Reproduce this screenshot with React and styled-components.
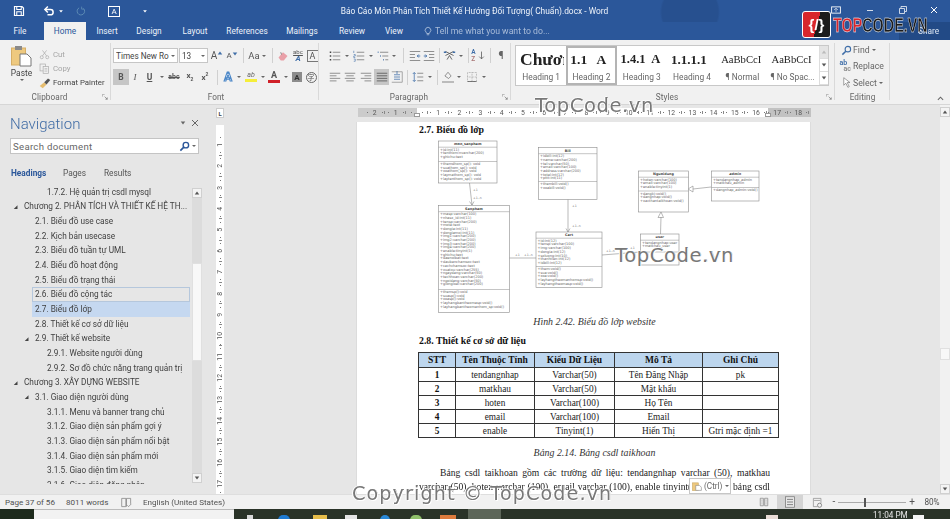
import React from "react";
import styled, { createGlobalStyle } from "styled-components";

const Global = createGlobalStyle`
  html, body { margin: 0; padding: 0; width: 950px; height: 519px; overflow: hidden; background: #f1f1f1; }
  * { box-sizing: border-box; }
  #root { width: 950px; height: 519px; }
`;
const ui = `Roboto, "Open Sans", "Liberation Sans", sans-serif`;
const serif = `"Liberation Serif", "Times New Roman", serif`;

const Shell = styled.div`
  position: relative; width: 950px; height: 519px; overflow: hidden; display: flex; flex-direction: column;
  font-family: ${ui}; color: #444; filter: blur(0.45px);
`;
/* ---------- Title bar ---------- */
const TitleBar = styled.div`
  height: 22px; background: radial-gradient(circle at 690px 12px, #27508f 0, #27508f 28px, transparent 30px), #2b579a; color: #fff;
  display: flex; align-items: center; position: relative; padding-left: 13px;
`;
const QuickBtn = styled.div`
  width: ${p => p.$w}px; display: flex; align-items: center; justify-content: ${p => p.$start ? "flex-start" : "center"};
  opacity: ${p => p.$faded ? .3 : 1};
`;
const DocTitle = styled.div`
  position: absolute; left: 0; right: 0; top: 0; height: 22px; text-align: center; line-height: 23px; font-size: 8.4px; color: #eef3fa; padding-right: 1px;
`;
const WindowBtns = styled.div`margin-left: auto; display: flex; align-items: center; padding-right: 1px; z-index: 1; margin-top: -2px;`;
const WinBtn = styled.div`width: ${p => p.$w}px; display: flex; justify-content: center;`;
const TabsBar = styled.div`height: 18px; background: #2b579a; display: flex; align-items: flex-end; padding-left: 3px; color: #eef3fa; font-size: 8.3px;`;
const Tab = styled.div`
  width: ${p => p.$w}px; height: 18px; line-height: 18px; text-align: center; margin-left: ${p => p.$ml || 0}px;
  background: ${p => p.$active ? "#f1f1f1" : "transparent"}; color: ${p => p.$active ? "#2b579a" : "#eef3fa"};
`;
const TellMe = styled.div`display: flex; align-items: center; gap: 2px; height: 18px; margin-left: 9px; color: #a9bcd9; font-size: 8.7px;`;
const Share = styled.div`
  margin-left: auto; width: 51px; height: 18px; background: #224a86; color: #dfe8f4; line-height: 18px; padding-left: 19px;
`;
/* ---------- Ribbon ---------- */
const Ribbon = styled.div`height: 65px; background: #f1f1f1; display: flex; border-bottom: 1px solid #d6d6d6; position: relative;`;
const Group = styled.div`
  width: ${p => p.$w}px; flex: none; display: flex; flex-direction: column; position: relative; padding-left: ${p => p.$pl || 0}px;
  &::after { content: ""; position: absolute; right: 0; top: 3px; bottom: 4px; width: 1px; background: #d9d9d9; }
`;
const GroupBody = styled.div`flex: 1; display: ${p => p.$row ? "flex" : "block"}; min-height: 0; padding-top: ${p => p.$pt ?? 8}px;`;
const GroupLabelRow = styled.div`height: 14px; margin-left: ${p => p.$ml || 0}px; display: flex; align-items: center; font-size: 8.2px; color: #666; margin-bottom: 0;`;
const GroupLabel = styled.div`flex: 1; text-align: center; letter-spacing: .1px;`;
const Launcher = styled.div`width: 12px; height: 10px; display: flex; align-items: center; justify-content: center;`;
const ToolRow = styled.div`display: flex; align-items: center; height: ${p => p.$h || 15}px; margin-bottom: ${p => p.$mb || 0}px;`;
const Tool = styled.div`
  width: ${p => p.$w}px; height: ${p => p.$h || 16}px; flex: none; display: flex; align-items: center; justify-content: center;
  background: ${p => p.$on ? "#c6c6c6" : "transparent"}; font-size: 9px; color: #444;
`;
const Caret = styled.div`
  width: ${p => p.$w || 8}px; flex: none; display: flex; justify-content: center;
  &::before { content: ""; border: 2px solid transparent; border-top: 2.5px solid #666; border-bottom: 0; }
`;
const Sep = styled.div`
  width: ${p => p.$w}px; flex: none; height: 15px; position: relative;
  &::before { content: ""; position: absolute; left: 50%; top: 0; bottom: 0; width: 1px; background: #d0d0d0; }
`;
const Combo = styled.div`
  width: ${p => p.$w}px; margin-right: ${p => p.$mr || 0}px; height: 15px; background: #fff; border: 1px solid #c6c6c6; flex: none;
  font-size: 8.2px; color: #444; display: flex; align-items: center; padding-left: 2px; white-space: nowrap; overflow: hidden;
  & > span { flex: 1; overflow: hidden; }
`;
const PasteCol = styled.div`width: 33px; margin-left: 5px; flex: none; display: flex; flex-direction: column; align-items: center; font-size: 8.4px; color: #444;`;
const PasteLabel = styled.div`margin-top: 1px; line-height: 11px;`;
const ClipCol = styled.div`display: flex; flex-direction: column; margin-top: 2px;`;
const ClipRow = styled.div`
  display: flex; align-items: center; gap: 2px; height: 16.4px; font-size: 7.8px; white-space: nowrap;
  color: ${p => p.$off ? "#a6a6a6" : "#444"};
`;
const ClipIcon = styled.div`width: 13px; display: flex; justify-content: center;`;
const Gallery = styled.div`width: 314px; height: 41px; background: #fff; border: 1px solid #c8c8c8; display: flex; overflow: hidden;`;
const StyleItem = styled.div`
  width: 50.3px; flex: none; height: 39px; display: flex; flex-direction: column; align-items: center; overflow: hidden;
  border: ${p => p.$on ? "2px solid #b4b4b4" : "2px solid transparent"}; margin-top: 0;
`;
const StylePreview = styled.div`
  height: 23px; width: 100%; overflow: hidden; display: flex; align-items: center; padding-left: 2px; white-space: pre; font-family: ${serif}; color: #222;
  font-size: ${p => p.$s}px; font-weight: ${p => p.$b ? 700 : 400};
`;
const StyleName = styled.div`font-size: 8.4px; color: #666; white-space: nowrap; line-height: 12px;`;
const GalleryScroll = styled.div`margin-left: auto; width: 9px; flex: none; display: flex; flex-direction: column; border-left: 1px solid #ddd;`;
const GalleryBtn = styled.div`
  flex: 1; display: flex; align-items: center; justify-content: center; background: ${p => p.$off ? "#e4e4e4" : "#fff"}; border-bottom: 1px solid #ddd;
`;
const EditRow = styled.div`display: flex; align-items: center; height: 16.3px; font-size: 8.7px; color: #666; padding-left: 4px;`;
const EditIcon = styled.div`width: 14px; flex: none; display: flex; justify-content: center;`;
const Collapse = styled.div`margin-left: auto; padding: 0 6px 2px 0; align-self: flex-end;`;

/* ---------- Main ---------- */
const Main = styled.div`height: 389px; display: flex; background: #e6e6e6;`;
const Nav = styled.div`width: 208px; flex: none; padding-top: 7px; display: flex; flex-direction: column;`;
const NavHead = styled.div`height: 24px; padding-left: 10px; display: flex; align-items: center;`;
const NavTitle = styled.div`font-size: 15px; font-weight: 300; color: #3f6ba5; flex: 1;`;
const NavHeadBtns = styled.div`display: flex; align-items: center; gap: 5px; padding-right: 9px; margin-top: -3px;`;
const Search = styled.div`
  margin: 2px 0 0 10px; width: 189px; height: 16px; background: #fff; border: 1px solid #c4c4c4; display: flex; align-items: center;
  padding-left: 2px; font-size: 9.6px; letter-spacing: .3px; color: #666;
  & > span { flex: 1; }
`;
const NavTabs = styled.div`margin: 11px 0 0 11px; height: 15px; display: flex; font-size: 8.3px; color: #555; align-items: center;`;
const NavTab = styled.div`width: ${p => p.$w}px; font-weight: ${p => p.$on ? 700 : 400}; color: ${p => p.$on ? "#2b579a" : "#555"};`;
const TreeWrap = styled.div`margin-top: 4.7px; display: flex;`;
const Tree = styled.div`width: 190px; height: 299px; overflow: hidden;`;
const TreeRow = styled.div`
  height: 14.67px; display: flex; align-items: center; font-size: 8.25px; color: #404040; white-space: nowrap;
  padding-left: ${p => [10, 21, 33][p.$lv]}px;
`;
const Twist = styled.div`width: 11px; flex: none; display: flex; justify-content: center; padding-left: 0;`;
const TreeLabel = styled.div`
  flex: 1; height: 14.67px; line-height: 14px; padding-left: 3px; overflow: hidden;
  background: ${p => p.$sel ? "#c5d8f0" : "transparent"};
  outline: ${p => p.$hov ? "1px solid #b5c7dc" : "none"}; outline-offset: -1px;
`;
const NavScroll = styled.div`margin: 3px 0 0 2px; width: 10px; height: 295px; background: #dcdcdc; display: flex; flex-direction: column;`;
const ScrollBtn = styled.div`height: 10px; flex: none; background: #f4f4f4; border: 1px solid #d0d0d0; display: flex; align-items: center; justify-content: center;`;
const ScrollThumb = styled.div`
  margin-top: ${p => p.$top}px; height: ${p => p.$h}px; background: #f8f8f8; flex: none; border: 1px solid #e0e0e0;
`;
const ScrollPad = styled.div`flex: 1;`;
const VRulerCol = styled.div`width: 8px; margin-left: 8px; flex: none; display: flex; flex-direction: column;`;
const Corner = styled.div`
  margin-top: 3px; height: 10px; background: #fff; border: 1px solid #ccc; font-size: 6px; font-weight: 700; color: #444; display: flex; align-items: center; justify-content: center;
`;
const VRuler = styled.div`margin-top: 7px; flex: 1; background: #fff; padding-top: 9.6px; overflow: hidden;`;
const VCell = styled.div`
  height: 21.2px; display: flex; flex-direction: column; align-items: center; justify-content: space-around; font-size: 6.8px; line-height: 7px; color: #555;
  background: linear-gradient(#888, #888) center bottom / 3px 1px no-repeat;
`;
const VNum = styled.span`writing-mode: vertical-rl; transform: rotate(180deg);`;
const Dot = styled.i`width: 1px; height: 1px; background: #777; display: block;`;
const Canvas = styled.div`flex: 1; min-width: 0; display: flex; flex-direction: column; overflow: hidden;`;
const HRuler = styled.div`
  margin: 3px 0 0 134px; width: 453px; height: 9px; flex: none; position: relative; display: flex; padding-left: 6px; overflow: hidden;
  background: linear-gradient(to right, #cbcbcb 59px, #fff 59px, #fff 410px, #c2c2c2 410px);
`;
const HCell = styled.div`
  width: 21.2px; flex: none; display: flex; align-items: center; justify-content: space-around; font-size: 6.8px; color: #555;
  background: linear-gradient(#888, #888) right center / 1px 3px no-repeat;
`;
const IndentMark = styled.div`
  position: absolute; left: ${p => p.$x}px; bottom: 0; width: 6px; height: 4px; background: #fff; border: 1px solid #999; border-bottom-width: 1px;
`;
const Page = styled.div`
  margin: 5px 0 0 132px; width: 455px; flex: 1; min-height: 0; background: #fff; overflow: hidden; padding: 1px 41px 0 62px; position: relative;
  font-family: ${serif}; color: #222; font-size: 9.3px; border-left: 1px solid #dcdcdc; border-right: 1px solid #dcdcdc;
`;
const DocHeading = styled.div`
  font-weight: 700; font-size: 9.8px; line-height: 14px; margin-top: ${p => p.$mt || 0}px; color: #111; white-space: nowrap;
`;
const Uml = styled.svg`display: block; margin: 1px 0 0 16px; flex: none;`;
const Caption = styled.div`
  text-align: center; font-style: italic; font-size: 9.9px; line-height: 12px; color: #333; margin-top: ${p => p.$mt || 0}px; width: 351px;
`;
const Table = styled.table`
  border-collapse: collapse; table-layout: fixed; width: 360px; margin: 4px 0 0 -1px; font-size: 9.3px; color: #222;
  th, td { border: 1px solid #333; padding: 0; text-align: center; white-space: nowrap; overflow: hidden; height: 14px; line-height: 12px; }
  th { background: #bdd6ee; height: 15px; font-weight: 700; color: #111; font-size: 9.5px; }
  td:first-child { font-weight: 700; color: #111; }
`;
const Para = styled.div`margin-top: 7px; font-size: 9.6px; color: #222; width: 351px;`;
const ParaLine = styled.div`
  line-height: 13.5px; height: 13.5px; white-space: normal; overflow: hidden; text-align: justify; text-align-last: justify; padding-left: ${p => p.$indent || 0}px;
`;
const PastePop = styled.div`
  position: absolute; left: 689px; top: 478px; width: 42px; height: 16px; background: #fff; border: 1px solid #c6c6c6;
  display: flex; align-items: center; gap: 2px; padding-left: 2px; font-family: ${ui}; font-size: 8.2px; color: #666; z-index: 3;
`;
const RightScroll = styled.div`width: 10px; flex: none; background: #f1f1f1; display: flex; flex-direction: column; padding-top: 2px;`;

/* ---------- Status + Taskbar ---------- */
const StatusBar = styled.div`
  height: 15px; background: #f1f1f1; display: flex; align-items: center; font-size: 8.1px; color: #505050; padding-left: 5px; border-top: 1px solid #dedede;
`;
const StatusItem = styled.div`width: ${p => p.$w}px; flex: none; white-space: nowrap; display: flex; align-items: center;`;
const StatusRight = styled.div`margin-left: auto; display: flex; align-items: center; height: 100%; padding-right: 4px;`;
const ViewBtn = styled.div`
  width: ${p => p.$w}px; height: 100%; display: flex; align-items: center; justify-content: center; background: ${p => p.$on ? "#d4d4d4" : "transparent"};
`;
const Zoom = styled.div`width: 68px; height: 1px; background: #aaa; position: relative; margin: 0 3px;`;
const ZoomThumb = styled.div`position: absolute; left: 26px; top: -4px; width: 2px; height: 9px; background: #555;`;
const ZoomPct = styled.div`width: 28px; text-align: center; font-size: 8.2px; margin-left: 3px;`;
const Taskbar = styled.div`height: 10px; background: #2a3328; display: flex; overflow: hidden; position: relative;`;
const StartBtn = styled.div`width: 34px; flex: none; background: #1d2a1c;`;
const TaskSearch = styled.div`width: 200px; flex: none; background: #f2f2f2; border-top: 1px solid #bbb;`;
const TaskIcon = styled.div`
  width: ${p => p.$w}px; height: 6px; margin: 6px 0 0 ${p => p.$ml}px; background: ${p => p.$c}; flex: none; border-radius: ${p => p.$r || 0}px ${p => p.$r || 0}px 0 0;
`;
const TaskActive = styled.div`width: 33px; margin-left: 12px; background: #5d6659; flex: none; display: flex; padding: 7px 0 0 8px; gap: 2px;`;
const TaskClock = styled.div`position: absolute; left: 873px; top: 1px; font-size: 8.2px; line-height: 10px; color: #e8e8e8;`;

/* ---------- Watermarks ---------- */
const Watermark = styled.div`
  position: absolute; left: ${p => p.$x}px; top: ${p => p.$y}px; font-family: "DejaVu Sans", sans-serif; font-size: ${p => p.$s}px; line-height: 1;
  letter-spacing: ${p => p.$ls}px; white-space: nowrap; color: #787878; z-index: 4;
  text-shadow: 1px 1px 0 #fff, -1px 0 0 #fff, 0 -1px 0 rgba(255,255,255,.8), .6px 0 0 #666;
`;
const Logo = styled.div`position: absolute; left: 802px; top: 11px; display: flex; align-items: center; gap: 2px; z-index: 5;`;
const LogoMark = styled.div`
  width: 29px; height: 27px; border-radius: 3px; border: 1px solid #fff; background: linear-gradient(105deg, #d8262c 0, #d8262c 52%, #1c1c1c 52%);
  color: #fff; font: 700 15px "Liberation Sans", sans-serif; display: flex; align-items: center; justify-content: center;
`;
const LogoText = styled.div`
  font: 700 20.5px "Liberation Sans", sans-serif; white-space: nowrap; transform: scaleX(.7); transform-origin: left center;
  -webkit-text-stroke: .4px #fff; color: #1b1b1b; width: 94px;
  & > b { color: #d8262c; }
`;

/* ---------- Icons (small drawings) ---------- */
const I = ({ s = 12, children, vb = "0 0 16 16" }) => <svg width={s} height={s} viewBox={vb} fill="none" style={{ display: "block" }}>{children}</svg>;
const G = "#5b5b5b", LG = "#8d8d8d", BL = "#3f6ea8";
const lines = (ys, x1, x2, c = LG, w = 1.3) => ys.map(y => <path key={y} d={`M${x1} ${y}H${x2}`} stroke={c} strokeWidth={w} />);
const Save = () => <I s={12}><path d="M2 2h10l2 2v10H2z" stroke="#fff" strokeWidth="1.6" /><path d="M5 2v4h6V2M5 14V9h6v5" stroke="#fff" strokeWidth="1.4" /></I>;
const Undo = () => <I s={12}><path d="M3 6h7a3.5 3.5 0 0 1 0 7H6" stroke="#fff" strokeWidth="2" /><path d="M6.5 2 2.5 6l4 4" stroke="#fff" strokeWidth="2" /></I>;
const Redo = () => <I s={10}><path d="M12 4a6 6 0 1 1-7-1" stroke="#cfe" strokeWidth="1.6" /><path d="M9 1v4h4" stroke="#cfe" strokeWidth="1.4" /></I>;
const SmallCaret = ({ c = "#fff" }) => <I s={6}><path d="M3 6h10L8 12z" fill={c} /></I>;
const Tri = ({ c = "#666" }) => <I s={6}><path d="M12 3v10H2z" fill={c} /></I>;
const Up = ({ c = "#555" }) => <I s={6}><path d="M8 4l6 8H2z" fill={c} /></I>;
const Down = ({ c = "#555" }) => <I s={6}><path d="M8 12 2 4h12z" fill={c} /></I>;
const LaunchIcon = () => <I s={6}><path d="M1 1h6M1 1v6" stroke="#888" strokeWidth="1.5" /><path d="M7 7l7 7M14 9v5H9" stroke="#666" strokeWidth="1.6" /></I>;
const PasteIcon = () => <svg width="21" height="22" viewBox="0 0 21 22" fill="none"><rect x="0.5" y="3" width="14" height="17" fill="#eec97f" stroke="#d6ae66" /><rect x="4" y="1" width="7" height="4" fill="#8a8a8a" /><path d="M9 9h7l4 4v8H9z" fill="#fff" stroke="#777" /></svg>;
const Cut = () => <I s={11}><circle cx="4" cy="12" r="2.2" stroke="#aaa" /><circle cx="12" cy="12" r="2.2" stroke="#aaa" /><path d="M5 10 11 2M11 10 5 2" stroke="#aaa" /></I>;
const CopyI = () => <I s={11}><rect x="1.5" y="1.5" width="8" height="10" stroke="#aaa" /><rect x="6" y="5" width="8" height="10" fill="#f1f1f1" stroke="#aaa" /><path d="M8 8h4M8 10h4M8 12h4" stroke="#bbb" /></I>;
const Painter = () => <I s={12}><path d="M1 12l6-5 3 3-5 5z" fill="#e6bd6f" /><path d="M7 7l5-5 3 2-5 6z" fill="#555" /></I>;
const Letter = ({ children, c = "#555", s = 9, b, it, u, f }) => <span style={{ color: c, fontSize: s, fontWeight: b ? 700 : 400, fontStyle: it ? "italic" : "normal", textDecoration: u ? "underline" : "none", fontFamily: f, lineHeight: 1 }}>{children}</span>;
const GrowA = ({ dir, s }) => <span style={{ display: "flex", alignItems: "flex-start" }}><Letter s={s}>A</Letter><span style={{ marginTop: -1 }}>{dir === "up" ? <Up c={BL} /> : <Down c={BL} />}</span></span>;
const Eraser = () => <I s={12}><path d="M2 10 8 3l6 5-5 6H5z" fill="#e9a0a8" /><path d="M5 3l1 3" stroke="#666" /></I>;
const AbcA = () => <span style={{ display: "flex", flexDirection: "column", alignItems: "center", lineHeight: 1 }}><Letter s={6} u>abc</Letter><Letter s={8} it b c={BL}>A</Letter></span>;
const BoxA = () => <span style={{ width: 12, height: 12, border: "1px solid #777", display: "flex", alignItems: "center", justifyContent: "center", fontSize: 9, color: "#555" }}>A</span>;
const TextFx = () => <Letter s={12} b c="#fff"><span style={{ WebkitTextStroke: "1px #4a86c7" }}>A</span></Letter>;
const Hl = () => <span style={{ display: "flex", flexDirection: "column", alignItems: "center", lineHeight: 1 }}><Letter s={7} it c="#666">ab</Letter><span style={{ width: 12, height: 3, background: "#f5ee3a" }} /></span>;
const RedA = () => <span style={{ display: "flex", flexDirection: "column", alignItems: "center", lineHeight: 1 }}><Letter s={9} b c="#555">A</Letter><span style={{ width: 12, height: 3, background: "#d02028" }} /></span>;
const ShadeA = () => <span style={{ width: 10, height: 10, background: "#8c8c8c", display: "flex", alignItems: "center", justifyContent: "center", fontSize: 8, fontWeight: 700, color: "#333" }}>A</span>;
const Circled = () => <span style={{ width: 11, height: 11, border: "1px solid #666", borderRadius: "50%", display: "flex", alignItems: "center", justifyContent: "center", fontSize: 7, color: "#555", fontFamily: '"Noto Sans CJK SC", sans-serif' }}>字</span>;
const Bullets = () => <I><path d="M1 3h2M1 8h2M1 13h2" stroke="#444" strokeWidth="2" />{lines([3, 8, 13], 5, 15)}</I>;
const Nums = () => <I><path d="M1 1v3M1 6h2v2H1v2h2M1 12h2v3H1" stroke={BL} strokeWidth=".8" />{lines([3, 8, 13], 5, 15)}</I>;
const Multi = () => <I><path d="M1 3h1M4 8h1M8 13h1" stroke={BL} strokeWidth="2" />{lines([3], 4, 15)}{lines([8], 7, 15)}{lines([13], 11, 15)}</I>;
const Indent = ({ flip }) => <I><g transform={flip ? "matrix(-1 0 0 1 16 0)" : ""}><path d="M1 8h4M3 6l2 2-2 2" stroke={BL} strokeWidth="1.2" />{lines([2, 14], 1, 15)}{lines([6, 10], 8, 15)}</g></I>;
const Sort = () => <I s={13}><path d="M3 3l10 5M13 3 3 8M5 13l3-5 3 5" stroke={G} strokeWidth="1.1" /><path d="M1 4h3M12 4h3" stroke={BL} strokeWidth="2" /></I>;
const AZ = () => <span style={{ display: "flex", alignItems: "center", gap: 1 }}><span style={{ display: "flex", flexDirection: "column", fontSize: 6.5, lineHeight: "6.5px", fontWeight: 600 }}><span style={{ color: BL }}>A</span><span style={{ color: "#a77" }}>Z</span></span><I s={9}><path d="M8 1v13M4 10l4 4 4-4" stroke={G} strokeWidth="1.4" /></I></span>;
const Align = ({ kind }) => { const d = { l: [[1, 15], [1, 10], [1, 15], [1, 10]], c: [[1, 15], [3, 13], [1, 15], [3, 13]], r: [[1, 15], [6, 15], [1, 15], [6, 15]], j: [[1, 15], [1, 15], [1, 15], [1, 15]] }[kind]; return <I>{d.map((p, i) => <path key={i} d={`M${p[0]} ${3 + i * 3.4}H${p[1]}`} stroke={kind === "j" ? "#666" : LG} strokeWidth="1.3" />)}</I>; };
const Dist = () => <I><path d="M1 1h14v14H1" stroke={LG} /><path d="M4 5h8M4 8h8M4 11h8M8 0v4" stroke={BL} /></I>;
const LineSp = () => <I><path d="M3 2v12M1 4l2-2 2 2M1 12l2 2 2-2" stroke={BL} />{lines([3, 8, 13], 7, 15)}</I>;
const Fill = () => <span style={{ display: "flex", flexDirection: "column", alignItems: "center" }}><I s={10}><path d="M3 8l5-6 5 6-4 4z" stroke={G} /></I><span style={{ width: 12, height: 2, background: "#fff", border: "1px solid #bbb" }} /></span>;
const Border = () => <I><path d="M2 2h12v12H2zM8 2v12M2 8h12" stroke="#999" strokeDasharray="1 1" /><path d="M2 14h12" stroke="#555" /></I>;
const Find = () => <I s={11}><circle cx="10" cy="6" r="4" stroke={BL} strokeWidth="1.6" /><path d="M7 9l-5 5" stroke={BL} strokeWidth="2.2" /></I>;
const ReplaceI = () => <span style={{ display: "flex", flexDirection: "column", lineHeight: "6px", fontSize: 7, color: BL, width: 13, fontWeight: 600 }}><span>ab</span><span style={{ paddingLeft: 4, color: "#888" }}>ac</span></span>;
const Arrow = () => <I s={11}><path d="M4 1v11l3-3 3 6 2-1-3-6h4z" stroke="#777" fill="#fff" /></I>;
const Bulb = () => <I s={10}><path d="M5 10a4.5 4.5 0 1 1 6 0l-1 2H6zM6 14h4" stroke="#dfe8f4" /></I>;
const SearchI = () => <I s={11}><circle cx="10" cy="6" r="4" stroke="#2b579a" strokeWidth="2" /><path d="M7 9l-5 5" stroke="#2b579a" strokeWidth="2.4" /></I>;
const Book = () => <I s={11}><path d="M1 2h6v12H1zM8 2h6v8M8 2v12" stroke="#777" /><path d="M9 12l2 2 4-4" stroke="#777" /></I>;
const ReadV = () => <I s={10}><path d="M2 2h5v12H2zM9 2h5v12H9z" stroke="#888" strokeWidth="1.2" /><path d="M3 5h3M3 8h3M3 11h3M10 5h3M10 8h3M10 11h3" stroke="#aaa" /></I>;
const PrintV = () => <I s={12}><rect x="2" y="1" width="12" height="14" fill="#e8e8e8" stroke="#777" />{lines([4.5, 8, 11.5], 4, 12, "#777", 1.2)}</I>;
const WebV = () => <I s={11}><path d="M2 2h11v7M2 2v12h6" stroke="#888" /><path d="M3 5h9" stroke="#888" /><circle cx="11" cy="12" r="3" stroke="#666" /></I>;
const Clip = () => <I s={10}><rect x="1" y="3" width="9" height="12" fill="#eec97f" stroke="#c9a45c" /><path d="M6 7h6l3 3v5H6z" fill="#fff" stroke="#888" /></I>;

/* ---------- UML drawing ---------- */
const umlFont = "DejaVu Sans, sans-serif";
const UmlClass = ({ x, y, w, h, name, attrs, methods, div, italicName }) => {
  const hdr = 6.2;
  return (
    <g>
      <rect x={x} y={y} width={w} height={h} fill="#fff" stroke="#8a8a8a" strokeWidth=".6" />
      <path d={`M${x} ${y + hdr}H${x + w}M${x} ${div}H${x + w}`} stroke="#8a8a8a" strokeWidth=".5" />
      <text x={x + w / 2} y={y + 4.4} textAnchor="middle" fontSize="3.4" fontWeight="700" fontStyle={italicName ? "italic" : "normal"} fill="#444" fontFamily={umlFont}>{name}</text>
      {attrs.map((t, i) => <text key={t} x={x + 1.5} y={y + hdr + 3.6 + i * 3.68} fontSize="3.5" fill="#666" fontFamily={umlFont}>{t}</text>)}
      {methods.map((t, i) => <text key={t} x={x + 1.5} y={div + 3.6 + i * 3.68} fontSize="3.5" fill="#666" fontFamily={umlFont}>{t}</text>)}
    </g>
  );
};
const Mult = ({ x, y, children }) => <text x={x} y={y} fontSize="3.2" fill="#777" fontFamily={umlFont}>{children}</text>;
const UmlDiagram = () => (
  <Uml width="330" height="178" viewBox="435 138 330 178">
    <g stroke="#8a8a8a" strokeWidth=".6" fill="none">
      <path d="M469.5 183 472 205M469.5 201.5 472 205l2-3.5" />
      <path d="M568 199V232M566 228.500 568 232l2-3.500" />
      <path d="M509 258H536M602 255 640 252" />
      <path d="M660.500 234 661 217" />
      <path d="M658 217.500 661 212l2.500 5.500z" />
      <path d="M711 187 693 189" />
      <path d="M693 186 688 189l5 3z" />
    </g>
    <Mult x="473" y="191">+1</Mult><Mult x="473" y="199">+1..n</Mult>
    <Mult x="572" y="207">+1</Mult><Mult x="572" y="227">+1..n</Mult>
    <Mult x="515" y="256">+1</Mult><Mult x="524" y="256">+1..n</Mult>
    <Mult x="606" y="252">+1..n</Mult><Mult x="630" y="249">+1</Mult>
    <UmlClass x={438.500} y={141} w={58.500} h={42} div={161.500} name="mon_sanpham" attrs={["+id:int(11)", "+tenthom:nvarchar(200)", "+ghichu:text"]} methods={["+themdhom_sp(): void", "+suathom_sp(): void", "+xoathom_sp(): void", "+laymathom_sp(): void", "+laytenthom_sp(): void"]} />
    <UmlClass x={438.500} y={205.500} w={71} h={107} div={289.500} name="Sanpham" attrs={["+masp:varchar(100)", "+nhasx_id:int(11)", "+tensp:varchar(200)", "+mota:text", "+dongia:int(11)", "+dongiamoi:int(11)", "+img1:varchar(200)", "+img2:varchar(200)", "+img3:varchar(200)", "+img4:varchar(200)", "+enable:tinyint(1)", "+ghichu:text", "+daenoibat:text", "+daubanchamsoc:text", "+cachchamsoc:text", "+xuatxu:varchar(255)", "+ngaydang:varchar(50)", "+techhoan:varchar(200)", "+ngoidang:varchar(50)", "+giongloai:varchar(200)"]} methods={["+themsp():void", "+suasp():void", "+xoasp():void", "+layhangbantheomasp:void()", "+layhangbantheomanhom_sp:void()"]} />
    <UmlClass x={538.500} y={147.500} w={58.500} h={52} div={181.500} name="Bill" attrs={["+idbill:int(12)", "+name:varchar(200)", "+tel:varchar(50)", "+email:varchar(100)", "+address:varchar(200)", "+total:int(12)", "+pttt:int(11)"]} methods={["+thembill:void()", "+xoabill:void()"]} />
    <UmlClass x={536} y={232} w={66} h={55.500} div={266.500} name="Cart" attrs={["+id:int(12)", "+tensp:varchar(100)", "+img:varchar(100)", "+dongia:int(12)", "+soluong:int(10)", "+thanhtien:int(12)", "+idbill:int(12)"]} methods={["+them:void()", "+sua:void()", "+xoa:void()", "+layhangtheomanhomsp:void()", "+layhangtheomasp:void()"]} />
    <UmlClass x={638.500} y={171} w={50} h={41} div={191} name="Nguoidung" attrs={["+hoten:varchar(100)", "+email:varchar(100)", "+enable:tinyint(1)"]} methods={["+dangki:void()", "+dangnhap:void()", "+xacthantaikhoan:void()"]} />
    <UmlClass x={711.500} y={171} w={47.500} h={30} div={187.500} name="admin" italicName attrs={["+tendangnhap_admin", "+matkhau_admin"]} methods={["+dangnhap_admin:void()"]} />
    <UmlClass x={640.500} y={234} w={38.500} h={31} div={252} name="user" italicName attrs={["+tendangnhap:user", "+matkhau_user"]} methods={[]} />
  </Uml>
);

const tree = [
  [2, "1.7.2. Hệ quản trị csdl mysql"],
  [0, "Chương 2. PHÂN TÍCH VÀ THIẾT KẾ HỆ TH...", 1],
  [1, "2.1. Biểu đồ use case"],
  [1, "2.2. Kịch bản usecase"],
  [1, "2.3. Biểu đồ tuần tự UML"],
  [1, "2.4. Biểu đồ hoạt động"],
  [1, "2.5. Biểu đồ trạng thái"],
  [1, "2.6. Biểu đồ cộng tác", 0, "hov"],
  [1, "2.7. Biểu đồ lớp", 0, "sel"],
  [1, "2.8. Thiết kế cơ sở dữ liệu"],
  [1, "2.9. Thiết kế website", 1],
  [2, "2.9.1. Website người dùng"],
  [2, "2.9.2. Sơ đồ chức năng trang quản trị"],
  [0, "Chương 3. XÂY DỰNG WEBSITE", 1],
  [1, "3.1. Giao diện người dùng", 1],
  [2, "3.1.1. Menu và banner trang chủ"],
  [2, "3.1.2. Giao diện sản phẩm gợi ý"],
  [2, "3.1.3. Giao diện sản phẩm nổi bật"],
  [2, "3.1.4. Giao diện sản phẩm mới"],
  [2, "3.1.5. Giao diện tìm kiếm"],
  [2, "3.1.6. Giao diện đăng nhập"],
];
const rows = [
  ["1", "tendangnhap", "Varchar(50)", "Tên Đăng Nhập", "pk"],
  ["2", "matkhau", "Varchar(50)", "Mật khẩu", ""],
  ["3", "hoten", "Varchar(100)", "Họ Tên", ""],
  ["4", "email", "Varchar(100)", "Email", ""],
  ["5", "enable", "Tinyint(1)", "Hiển Thị", "Gtri mặc định =1"],
];
const styleItems = [
  ["Chương", "Heading 1", 17.5, true],
  ["1.1   A", "Heading 2", 13.5, true, true],
  ["1.4.1  A", "Heading 3", 12.5, true],
  ["1.1.1.1", "Heading 4", 13, true],
  ["AaBbCcI", "¶ Normal", 10.6],
  ["AaBbCcI", "¶ No Spac...", 10.6],
];
const tabs = [["Insert", 42], ["Design", 42], ["Layout", 50], ["References", 54], ["Mailings", 56], ["Review", 44], ["View", 40]];

export default function App() {
  return (
    <Shell>
      <Global />
      <TitleBar>
        <QuickBtn $w={29} $start><Save /></QuickBtn>
        <QuickBtn $w={14}><Undo /></QuickBtn>
        <QuickBtn $w={10}><SmallCaret /></QuickBtn>
        <QuickBtn $w={30} $faded><Redo /></QuickBtn>
        <QuickBtn $w={36}><span style={{ width: 12, height: 11, border: "1px solid #fff", fontSize: 8, lineHeight: "9px", textAlign: "center" }}>A</span></QuickBtn>
        <QuickBtn $w={26}><SmallCaret /></QuickBtn>
        <DocTitle>Báo Cáo Môn Phân Tích Thiết Kế Hướng Đối Tượng( Chuẩn).docx - Word</DocTitle>
        <WindowBtns>
          <WinBtn $w={34}><I s={10}><rect x="1" y="3" width="14" height="10" stroke="#fff" strokeWidth="1.4" /><path d="M8 11V6M5 8l3-3 3 3" stroke="#fff" /></I></WinBtn>
          <WinBtn $w={33}><I s={8}><path d="M2 9h12" stroke="#fff" strokeWidth="1.6" /></I></WinBtn>
          <WinBtn $w={33}><I s={8}><path d="M1 5h10v10H1zM4 4V1h11v10h-3" stroke="#fff" strokeWidth="1.5" /></I></WinBtn>
          <WinBtn $w={30}><I s={8}><path d="M2 2l12 12M14 2 2 14" stroke="#fff" strokeWidth="2" /></I></WinBtn>
        </WindowBtns>
      </TitleBar>
      <TabsBar>
        <Tab $w={34}>File</Tab>
        <Tab $w={42} $ml={7} $active>Home</Tab>
        {tabs.map(([t, w]) => <Tab key={t} $w={w}>{t}</Tab>)}
        <TellMe><Bulb />Tell me what you want to do...</TellMe>
        <Share>Share</Share>
      </TabsBar>

      <Ribbon>
        <Group $w={111}>
          <GroupBody $row $pt={5}>
            <PasteCol>
              <PasteIcon />
              <PasteLabel>Paste</PasteLabel>
              <Caret />
            </PasteCol>
            <ClipCol>
              <ClipRow $off><ClipIcon><Cut /></ClipIcon>Cut</ClipRow>
              <ClipRow $off><ClipIcon><CopyI /></ClipIcon>Copy</ClipRow>
              <ClipRow><ClipIcon><Painter /></ClipIcon>Format Painter</ClipRow>
            </ClipCol>
          </GroupBody>
          <GroupLabelRow><GroupLabel>Clipboard</GroupLabel><Launcher><LaunchIcon /></Launcher></GroupLabelRow>
        </Group>

        <Group $w={208} $pl={2}>
          <GroupBody>
            <ToolRow $mb={6}>
              <Combo $w={65} $mr={1}><span>Times New Ro</span><Caret /></Combo>
              <Combo $w={29}><span>13</span><Caret /></Combo>
              <Tool $w={18}><GrowA dir="up" s={10} /></Tool>
              <Tool $w={12}><GrowA s={8} /></Tool>
              <Sep $w={10} />
              <Tool $w={12}><Letter s={9.5}>Aa</Letter></Tool>
              <Caret />
              <Sep $w={8} />
              <Tool $w={14}><Eraser /></Tool>
              <Tool $w={16}><AbcA /></Tool>
              <Tool $w={13}><BoxA /></Tool>
            </ToolRow>
            <ToolRow $h={16}>
              <Tool $w={16} $on><Letter b s={8.5}>B</Letter></Tool>
              <Tool $w={12}><Letter it s={9} f="Liberation Serif">I</Letter></Tool>
              <Tool $w={17}><Letter u b s={8.5}>U</Letter></Tool>
              <Caret />
              <Tool $w={16}><Letter b s={7}><s>abc</s></Letter></Tool>
              <Tool $w={16}><Letter b s={8}>x<sub style={{ fontSize: 5 }}>2</sub></Letter></Tool>
              <Tool $w={14}><Letter b s={8}>x<sup style={{ fontSize: 5 }}>2</sup></Letter></Tool>
              <Sep $w={10} />
              <Tool $w={12}><TextFx /></Tool>
              <Caret $w={9} />
              <Tool $w={16}><Hl /></Tool>
              <Caret />
              <Tool $w={14}><RedA /></Tool>
              <Caret $w={9} />
              <Tool $w={14}><ShadeA /></Tool>
              <Tool $w={14}><Circled /></Tool>
            </ToolRow>
          </GroupBody>
          <GroupLabelRow><GroupLabel>Font</GroupLabel></GroupLabelRow>
        </Group>

        <Group $w={192} $pl={9}>
          <GroupBody>
            <ToolRow $mb={6}>
              <Tool $w={14}><Bullets /></Tool><Caret $w={9} />
              <Tool $w={16}><Nums /></Tool><Caret />
              <Tool $w={15}><Multi /></Tool><Caret />
              <Sep $w={10} />
              <Tool $w={14}><Indent flip /></Tool>
              <Tool $w={14}><Indent /></Tool>
              <Sep $w={6} />
              <Tool $w={15}><Sort /></Tool><Caret />
              <Sep $w={6} />
              <Tool $w={15}><AZ /></Tool>
              <Sep $w={8} />
              <Tool $w={14}><Letter s={10} b c="#666">¶</Letter></Tool>
            </ToolRow>
            <ToolRow $h={16}>
              <Tool $w={14}><Align kind="l" /></Tool>
              <Tool $w={15}><Align kind="c" /></Tool>
              <Tool $w={17}><Align kind="r" /></Tool>
              <Tool $w={15} $on><Align kind="j" /></Tool>
              <Tool $w={16}><Dist /></Tool>
              <Sep $w={4} />
              <Tool $w={18}><LineSp /></Tool><Caret $w={6} />
              <Sep $w={8} />
              <Tool $w={14}><Fill /></Tool><Caret />
              <Tool $w={18}><Border /></Tool><Caret $w={5} />
            </ToolRow>
          </GroupBody>
          <GroupLabelRow $ml={-9}><GroupLabel>Paragraph</GroupLabel><Launcher><LaunchIcon /></Launcher></GroupLabelRow>
        </Group>

        <Group $w={324} $pl={4}>
          <GroupBody $pt={5}>
            <Gallery>
              {styleItems.map(([p, n, s, b, on]) => (
                <StyleItem key={n} $on={on}>
                  <StylePreview $s={s} $b={b}>{p}</StylePreview>
                  <StyleName>{n}</StyleName>
                </StyleItem>
              ))}
              <GalleryScroll>
                <GalleryBtn $off><Up c="#bbb" /></GalleryBtn>
                <GalleryBtn><Down /></GalleryBtn>
                <GalleryBtn><Down /></GalleryBtn>
              </GalleryScroll>
            </Gallery>
          </GroupBody>
          <GroupLabelRow $ml={-4}><GroupLabel>Styles</GroupLabel><Launcher><LaunchIcon /></Launcher></GroupLabelRow>
        </Group>

        <Group $w={55}>
          <GroupBody $pt={2}>
            <EditRow><EditIcon><Find /></EditIcon>Find<Caret /></EditRow>
            <EditRow><EditIcon><ReplaceI /></EditIcon>Replace</EditRow>
            <EditRow><EditIcon><Arrow /></EditIcon>Select<Caret /></EditRow>
          </GroupBody>
          <GroupLabelRow><GroupLabel>Editing</GroupLabel></GroupLabelRow>
        </Group>
        <Collapse><I s={7}><path d="M2 11l6-6 6 6" stroke="#666" strokeWidth="2.4" /></I></Collapse>
      </Ribbon>

      <Main>
        <Nav>
          <NavHead>
            <NavTitle>Navigation</NavTitle>
            <NavHeadBtns><Down c="#666" /><I s={8}><path d="M2 2l12 12M14 2 2 14" stroke="#666" strokeWidth="2" /></I></NavHeadBtns>
          </NavHead>
          <Search><span>Search document</span><SearchI /><Caret /></Search>
          <NavTabs><NavTab $w={52} $on>Headings</NavTab><NavTab $w={41}>Pages</NavTab><NavTab $w={40}>Results</NavTab></NavTabs>
          <TreeWrap>
            <Tree>
              {tree.map(([lv, t, tw, st]) => (
                <TreeRow key={t} $lv={lv}>
                  <Twist>{tw ? <Tri c="#444" /> : null}</Twist>
                  <TreeLabel $sel={st === "sel"} $hov={st === "hov"}>{t}</TreeLabel>
                </TreeRow>
              ))}
            </Tree>
            <NavScroll>
              <ScrollBtn><Up /></ScrollBtn>
              <ScrollThumb $top={65} $h={98} />
              <ScrollPad />
              <ScrollBtn><Down /></ScrollBtn>
            </NavScroll>
          </TreeWrap>
        </Nav>
        <VRulerCol>
          <Corner>L</Corner>
          <VRuler>
            {Array.from({ length: 18 }, (_, i) => (
              <VCell key={i}><Dot /><VNum>{i + 1}</VNum><Dot /></VCell>
            ))}
          </VRuler>
        </VRulerCol>
        <Canvas>
          <HRuler>
            {["2", "1", "", ...Array.from({ length: 18 }, (_, i) => String(i + 1))].map((n, i) => (
              <HCell key={i}><Dot />{n ? <span>{n}</span> : null}<Dot /></HCell>
            ))}
            <IndentMark $x={56} />
            <IndentMark $x={407} />
          </HRuler>
          <Page>
            <DocHeading>2.7. Biểu đồ lớp</DocHeading>
            <UmlDiagram />
            <Caption>Hình 2.42. Biểu đồ lớp website</Caption>
            <DocHeading $mt={6}>2.8. Thiết kế cơ sở dữ liệu</DocHeading>
            <Table>
              <colgroup><col width="37" /><col width="79" /><col width="80" /><col width="88" /><col width="76" /></colgroup>
              <thead><tr><th>STT</th><th>Tên Thuộc Tính</th><th>Kiểu Dữ Liệu</th><th>Mô Tả</th><th>Ghi Chú</th></tr></thead>
              <tbody>{rows.map(r => <tr key={r[0]}>{r.map((c, i) => <td key={i}>{c}</td>)}</tr>)}</tbody>
            </Table>
            <Caption $mt={9}>Bảng 2.14. Bảng csdl taikhoan</Caption>
            <Para>
              <ParaLine $indent={21}>Bảng csdl taikhoan gồm các trường dữ liệu: tendangnhap varchar (50), matkhau</ParaLine>
              <ParaLine>varchar (50), hoten varchar (100), email varchar (100), enable tinyint(1). Đây là bảng csdl</ParaLine>
              <ParaLine>taikhoan lưu trữ thông tin tài khoản của người dùng trong hệ thống website</ParaLine>
            </Para>
          </Page>
        </Canvas>
        <RightScroll>
          <ScrollBtn><Up /></ScrollBtn>
          <ScrollThumb $top={231} $h={12} />
          <ScrollPad />
          <ScrollBtn><Down /></ScrollBtn>
        </RightScroll>
      </Main>

      <StatusBar>
        <StatusItem $w={61}>Page 37 of 56</StatusItem>
        <StatusItem $w={55}>8011 words</StatusItem>
        <StatusItem $w={22}><Book /></StatusItem>
        <StatusItem $w={90}>English (United States)</StatusItem>
        <StatusRight>
          <ViewBtn $w={26}><ReadV /></ViewBtn>
          <ViewBtn $w={26} $on><PrintV /></ViewBtn>
          <ViewBtn $w={30}><WebV /></ViewBtn>
          <Letter s={10}>-</Letter>
          <Zoom><ZoomThumb /></Zoom>
          <Letter s={10}>+</Letter>
          <ZoomPct>80%</ZoomPct>
        </StatusRight>
      </StatusBar>
      <Taskbar>
        <StartBtn />
        <TaskSearch />
        <TaskIcon $w={6} $ml={13} $c="#d8d8d8" />
        <TaskIcon $w={12} $ml={25} $c="#1f7ad1" $r={5} />
        <TaskIcon $w={14} $ml={23} $c="#e6bd4a" />
        <TaskIcon $w={12} $ml={18} $c="#e4e4e4" />
        <TaskIcon $w={10} $ml={23} $c="#2a89d8" $r={5} />
        <TaskIcon $w={12} $ml={20} $c="#8fc06a" $r={5} />
        <TaskIcon $w={16} $ml={18} $c="#dd7b3d" />
        <TaskActive><TaskIcon $w={8} $ml={0} $c="#2b579a" /><TaskIcon $w={6} $ml={0} $c="#eee" /></TaskActive>
        <TaskIcon $w={12} $ml={265} $c="#e9dcd6" />
        <TaskIcon $w={11} $ml={135} $c="#f4f4f4" />
        <TaskClock>11:04 PM</TaskClock>
      </Taskbar>

      <PastePop><Clip />(Ctrl)<Caret $w={5} /></PastePop>
      <Watermark $x={535} $y={96} $s={19.5} $ls={.6}>TopCode.vn</Watermark>
      <Watermark $x={615} $y={246} $s={19.5} $ls={.6}>TopCode.vn</Watermark>
      <Watermark $x={352} $y={484} $s={19} $ls={1.2}>Copyright © TopCode.vn</Watermark>
      <Logo><LogoMark>{"{/}"}</LogoMark><LogoText><b>TOP</b>CODE.VN</LogoText></Logo>
    </Shell>
  );
}
